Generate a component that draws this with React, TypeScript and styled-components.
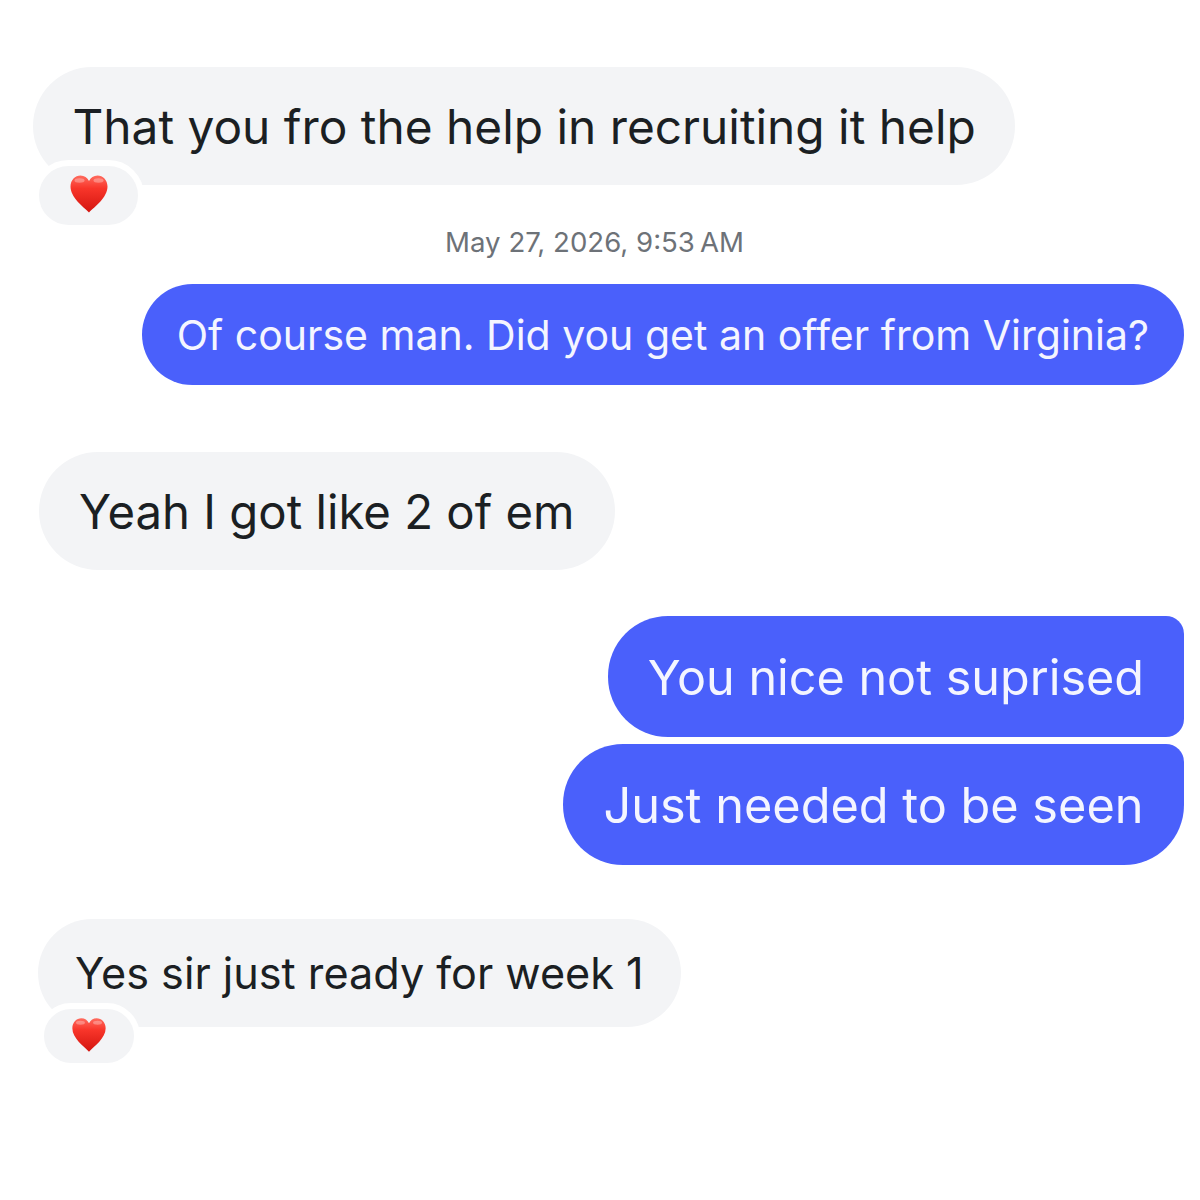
import React from "react";
import styled, { createGlobalStyle } from "styled-components";

const GlobalStyle = createGlobalStyle`
  html, body {
    margin: 0;
    padding: 0;
    background: #ffffff;
  }
`;

const Thread = styled.div`
  width: 1184px;
  height: 1200px;
  padding-top: 67px;
  box-sizing: border-box;
  display: flex;
  flex-direction: column;
  font-family: Inter, "Liberation Sans", sans-serif;
`;

const Row = styled.div<{ $left?: number; $top?: number }>`
  display: flex;
  justify-content: ${(p) => (p.$left !== undefined ? "flex-start" : "flex-end")};
  padding-left: ${(p) => p.$left ?? 0}px;
  margin-top: ${(p) => p.$top ?? 0}px;
`;

const Bubble = styled.div<{
  $height: number;
  $padX: number;
  $size: number;
  $nudge?: number;
  $mine?: boolean;
  $corners?: string;
}>`
  position: relative;
  box-sizing: border-box;
  height: ${(p) => p.$height}px;
  padding: ${(p) => p.$nudge ?? 0}px ${(p) => p.$padX}px 0;
  display: flex;
  align-items: center;
  font-size: ${(p) => p.$size}px;
  white-space: nowrap;
  color: ${(p) => (p.$mine ? "#f4f5ff" : "#1b1f23")};
  background: ${(p) => (p.$mine ? "#4a60fb" : "#f3f4f6")};
  border-radius: ${(p) => p.$corners ?? `${p.$height / 2}px`};
`;

const Stamp = styled.div`
  margin-top: 39px;
  padding-left: 5px;
  text-align: center;
  font-size: 27.6px;
  line-height: 36px;
  color: #6d7278;
`;

const Reaction = styled.div<{ $top: number; $w: number; $h: number }>`
  position: absolute;
  left: 0;
  top: ${(p) => p.$top}px;
  width: ${(p) => p.$w}px;
  height: ${(p) => p.$h}px;
  border: 6px solid #ffffff;
  border-radius: 40px;
  background: #f3f4f6;
  display: flex;
  align-items: center;
  justify-content: center;
`;

const HeartIcon = styled.svg`
  margin-bottom: 3px;
`;

function Heart({ size }: { size: number }) {
  const id = `heart-${size}`;
  return (
    <HeartIcon width={size} height={size} viewBox="0 0 40 40">
      <defs>
        <linearGradient id={id} x1="0" y1="0" x2="0" y2="1">
          <stop offset="0" stopColor="#ff6b5e" />
          <stop offset="0.35" stopColor="#f8352a" />
          <stop offset="1" stopColor="#d3150f" />
        </linearGradient>
      </defs>
      <path
        d="M20 38.5C14 32.5 1.5 23.5 1.5 12.5C1.5 6 6.2 1.5 11.5 1.5C15.3 1.5 18.4 3.6 20 7C21.6 3.6 24.7 1.5 28.5 1.5C33.8 1.5 38.5 6 38.5 12.5C38.5 23.5 26 32.5 20 38.5Z"
        fill={`url(#${id})`}
      />
      <ellipse cx="10.5" cy="6.5" rx="5" ry="2.2" fill="#ffffff" opacity="0.3" />
      <ellipse cx="29.5" cy="6.5" rx="5" ry="2.2" fill="#ffffff" opacity="0.3" />
    </HeartIcon>
  );
}

export default function App() {
  return (
    <>
      <GlobalStyle />
      <Thread>
        <Row $left={33}>
          <Bubble $height={118} $padX={39.5} $size={47.8} $nudge={2}>
            That you fro the help in recruiting it help
            <Reaction $top={93} $w={99} $h={59}>
              <Heart size={40} />
            </Reaction>
          </Bubble>
        </Row>
        <Stamp>May 27, 2026, 9:53{"\u202f"}AM</Stamp>
        <Row $top={24}>
          <Bubble $mine $height={101} $padX={35} $size={41.02}>
            Of course man. Did you get an offer from Virginia?
          </Bubble>
        </Row>
        <Row $left={39} $top={67}>
          <Bubble $height={118} $padX={40} $size={47.3}>
            Yeah I got like 2 of em
          </Bubble>
        </Row>
        <Row $top={46}>
          <Bubble $mine $height={121} $padX={40} $size={48.5} $nudge={2} $corners="60px 18px 18px 60px">
            You nice not suprised
          </Bubble>
        </Row>
        <Row $top={7}>
          <Bubble $mine $height={121} $padX={40.5} $size={48.65} $nudge={2} $corners="60px 18px 60px 60px">
            Just needed to be seen
          </Bubble>
        </Row>
        <Row $left={38} $top={54}>
          <Bubble $height={108} $padX={37} $size={43.2}>
            Yes sir just ready for week 1
            <Reaction $top={84} $w={90} $h={54}>
              <Heart size={36} />
            </Reaction>
          </Bubble>
        </Row>
      </Thread>
    </>
  );
}
